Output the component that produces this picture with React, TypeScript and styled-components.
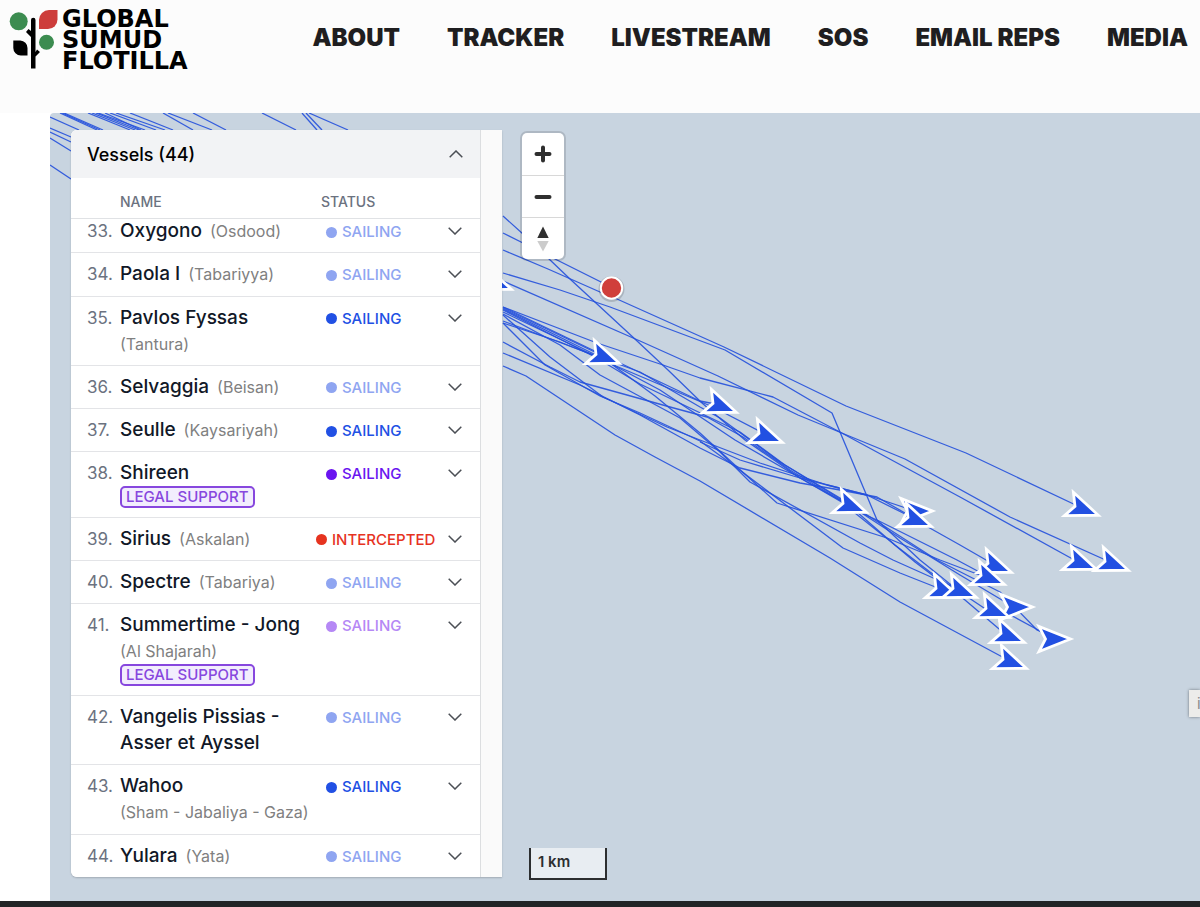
import React, { useLayoutEffect, useRef } from 'react';
import styled, { createGlobalStyle } from 'styled-components';

const GlobalStyle = createGlobalStyle`
  *, *::before, *::after { box-sizing: border-box; }
  html, body, #root { margin: 0; height: 100%; }
  body { background: #ffffff; font-family: Inter, "Liberation Sans", sans-serif; color: #111827; }
  button { font: inherit; color: inherit; border: 0; padding: 0; background: none; cursor: pointer; }
`;

/* ---------- page frame ---------- */

const Page = styled.div`
  min-height: 100%;
  display: flex;
  flex-direction: column;
`;

const Header = styled.header`
  height: 113px;
  flex: none;
  display: flex;
  align-items: flex-start;
  justify-content: space-between;
  padding: 9px 12px 0 9px;
  background: #fcfcfc;
`;

const Brand = styled.a`
  display: flex;
  gap: 4px;
  color: #000000;
  text-decoration: none;
`;

const BrandName = styled.span`
  display: flex;
  flex-direction: column;
  font-family: "DejaVu Sans", Inter, sans-serif;
  font-size: 24px;
  font-weight: 700;
  line-height: 21px;
`;

const Nav = styled.nav`
  display: flex;
  gap: 47px;
  padding-top: 13px;
`;

const NavLink = styled.a`
  color: #1f1e20;
  font-size: 24px;
  font-weight: 900;
  line-height: 32px;
  text-decoration: none;
  white-space: nowrap;
`;

const Footer = styled.footer`
  height: 6px;
  flex: none;
  background: #222426;
`;

/* ---------- map ---------- */

const MapArea = styled.main`
  position: relative;
  flex: 1;
  display: flex;
  gap: 20px;
  margin-left: 50px;
  padding: 17px 0 24px 21px;
  overflow: hidden;
  border-top-left-radius: 4px;
  background: #c8d4e0;
`;

const Routes = styled.svg`
  position: absolute;
  inset: 0;
  width: 100%;
  height: 100%;
`;

const MapTools = styled.div`
  position: relative;
  display: flex;
  flex-direction: column;
  justify-content: space-between;
  align-items: flex-start;
  padding-top: 3px;
`;

const ZoomGroup = styled.div`
  display: flex;
  flex-direction: column;
  width: 42px;
  overflow: hidden;
  border-radius: 5px;
  background: #ffffff;
  box-shadow: 0 0 0 2px rgba(0, 0, 0, 0.13);
`;

const ToolButton = styled.button`
  display: flex;
  align-items: center;
  justify-content: center;
  height: 42px;
  & + & { border-top: 1px solid #d8d8d8; }
`;

const ScaleBar = styled.div`
  width: 78px;
  height: 32px;
  margin: 0 0 -3px 7px;
  padding-left: 7px;
  border: 2px solid #2c2e30;
  border-top: 0;
  background: #e8edf2;
  color: #2c2e30;
  font-size: 15px;
  font-weight: 600;
  line-height: 28px;
`;

const InfoTab = styled.button`
  position: absolute;
  right: 0;
  bottom: 184px;
  width: 11px;
  height: 27px;
  padding-left: 8px;
  overflow: hidden;
  background: #ececea;
  box-shadow: 0 0 3px rgba(0, 0, 0, 0.45);
  color: #8a8a8a;
  font-size: 15px;
  text-align: left;
`;

/* ---------- vessel panel ---------- */

const Panel = styled.section`
  position: relative;
  width: 431px;
  flex: none;
  display: flex;
  overflow: hidden;
  border-radius: 6px 0 0 6px;
  background: #fafafa;
  box-shadow: 0 1px 2px rgba(0, 0, 0, 0.2);
`;

const PanelBody = styled.div`
  flex: 1;
  display: flex;
  flex-direction: column;
  margin-right: 21px;
  border-right: 1px solid #dcdee0;
  background: #ffffff;
`;

const PanelToggle = styled.button`
  height: 48px;
  flex: none;
  display: flex;
  align-items: center;
  justify-content: space-between;
  padding: 0 17px 0 16px;
  background: #f2f3f5;
  color: #000000;
  font-size: 18px;
  font-weight: 500;
`;

const Scroller = styled.div`
  flex: 1 1 0;
  min-height: 0;
  overflow-y: auto;
  scrollbar-width: none;
`;

const VesselTable = styled.table`
  width: 100%;
  height: calc(100% + 9px);
  border-collapse: separate;
  border-spacing: 0;
  table-layout: fixed;
`;

const HeadCell = styled.th<{ $inset?: number }>`
  position: sticky;
  top: 0;
  height: 41px;
  z-index: 1;
  padding: 7px 0 0 ${(p) => p.$inset ?? 0}px;
  border-bottom: 1px solid #e0e2e5;
  background: #ffffff;
  color: #6b7280;
  font-size: 14px;
  font-weight: 500;
  line-height: 18px;
  text-align: left;
`;

const Cell = styled.td`
  padding: 8px 0;
  border-bottom: 1px solid #e3e4e7;
  vertical-align: top;
  line-height: 26px;
  tr:last-child > & { border-bottom: 0; }
`;

const NumberCell = styled(Cell)`
  padding-left: 16px;
  color: #6b7280;
  font-size: 17px;
`;

const Names = styled.div`
  display: flex;
  flex-wrap: wrap;
  column-gap: 8px;
`;

const VesselName = styled.span`
  font-size: 19px;
  font-weight: 500;
`;

const Alias = styled.span`
  color: #808080;
  font-size: 16px;
  white-space: nowrap;
`;

const Badge = styled.span`
  display: block;
  width: fit-content;
  height: 22px;
  padding: 0 4px;
  border: 2px solid #8747de;
  border-radius: 5px;
  background: #f2edfd;
  color: #8747de;
  font-size: 15px;
  font-weight: 500;
  line-height: 18px;
`;

const Status = styled.span<{ $color: string; $wide: boolean }>`
  display: flex;
  align-items: center;
  gap: 5px;
  padding-left: ${(p) => (p.$wide ? 0 : 10)}px;
  color: ${(p) => p.$color};
  font-size: 15px;
  font-weight: 500;
  line-height: 26px;
  white-space: nowrap;
  &::before {
    content: "";
    width: 11px;
    height: 11px;
    border-radius: 50%;
    background: currentColor;
  }
`;

const StatusCell = styled(Cell)`
  padding: 9px 0 7px;
`;

const RowToggle = styled.button`
  display: flex;
  align-items: center;
  height: 26px;
`;

/* ---------- data ---------- */

type Tone = 'pale' | 'blue' | 'violet' | 'lilac' | 'red';

const tones: Record<Tone, string> = {
  pale: '#8fa5f1',
  blue: '#2150e4',
  violet: '#6a14f0',
  lilac: '#b588f5',
  red: '#e6331f',
};

interface Vessel {
  no: number;
  name: string;
  alias?: string;
  tone: Tone;
  legal?: boolean;
}

const vessels: Vessel[] = [
  { no: 33, name: 'Oxygono', alias: 'Osdood', tone: 'pale' },
  { no: 34, name: 'Paola I', alias: 'Tabariyya', tone: 'pale' },
  { no: 35, name: 'Pavlos Fyssas', alias: 'Tantura', tone: 'blue' },
  { no: 36, name: 'Selvaggia', alias: 'Beisan', tone: 'pale' },
  { no: 37, name: 'Seulle', alias: 'Kaysariyah', tone: 'blue' },
  { no: 38, name: 'Shireen', tone: 'violet', legal: true },
  { no: 39, name: 'Sirius', alias: 'Askalan', tone: 'red' },
  { no: 40, name: 'Spectre', alias: 'Tabariya', tone: 'pale' },
  { no: 41, name: 'Summertime - Jong', alias: 'Al Shajarah', tone: 'lilac', legal: true },
  { no: 42, name: 'Vangelis Pissias - Asser et Ayssel', tone: 'pale' },
  { no: 43, name: 'Wahoo', alias: 'Sham - Jabaliya - Gaza', tone: 'blue' },
  { no: 44, name: 'Yulara', alias: 'Yata', tone: 'pale' },
];

const navItems = ['ABOUT', 'TRACKER', 'LIVESTREAM', 'SOS', 'EMAIL REPS', 'MEDIA'];

const routes = [
  '50,117 79,130', '62,113 100,130', '64,113 103,130', '60,113 97,130',
  '50,128 71,137', '50,132 71,142', '50,138 71,151', '50,165 71,179',
  '88,113 130,130', '92,113 135,130', '96,113 139,130', '98,113 145,130', '105,113 141,130',
  '110,113 156,130', '116,113 165,130', '130,113 173,130',
  '163,113 193,130', '168,113 212,130', '193,113 226,130', '262,113 296,130',
  '302,113 317,130', '306,113 322,130', '309,113 348,130',
  '503,233 523,243 553,258 611,287',
  '503,216 523,234 548,258 570,279 636,340 668,370 702,403 745,440 800,478 845,503',
  '503,250 548,269 600,292 617,299 724,347 846,406 966,453 1082,508',
  '503,273 560,290 610,307 725,350 832,413 877,520 920,560 960,592',
  '503,281 640,341 718,376 798,415 905,459 1010,517 1110,562',
  '503,307 597,343 663,365 700,378 773,397 838,431 960,497 1078,562',
  '503,308 603,356',
  '503,307 603,355 660,382 700,401 720,405',
  '503,309 598,356 616,366 713,407 765,434',
  '503,310 595,357 640,384 740,432 785,465 845,501',
  '503,312 610,363 655,396 700,433 737,467 777,503 887,538 940,560 985,577',
  '503,314 560,345 600,375 680,418 720,452 750,482 860,543 893,560 960,590',
  '503,315 550,357 587,385 603,397 667,427 700,440 760,463 827,485 867,495 912,510',
  '503,323 545,365 600,396 640,413 700,441 737,468 843,548 900,573 943,590',
  '503,321 580,350 640,372 700,407 720,418 780,462 845,502',
  '503,323 560,342 600,358 660,390 735,440 845,504',
  '503,342 550,367 580,382 627,395 670,407 707,417 743,437 790,470 845,503',
  '503,353 580,385 640,415 700,448 740,468 800,483 840,490 877,497 912,517',
  '503,366 526,376 615,435 655,457 700,481 830,558 900,602 1008,660',
  '700,442 740,460 800,478 867,495 903,513 960,545 993,564',
  '850,508 877,520 957,560 985,575',
  '850,505 867,515 937,560 1000,592 1037,630 1050,636',
  '850,509 890,541 915,562 965,600 1005,634',
  '850,506 895,545 930,572 990,612',
  '860,512 900,538 960,575 1012,606',
  '1005,612 1053,638',
];

/* x, y, heading in degrees clockwise from east */
const arrows: [number, number, number][] = [
  [495, 283, 21], [603, 357, 21], [720, 406, 21], [766, 436, 21], [850, 506, 21],
  [915, 511, 0], [915, 520, 21], [1082, 509, 21], [1080, 563, 21], [1112, 564, 21],
  [995, 566, 21], [988, 578, 21], [943, 591, 21], [960, 591, 21], [1015, 607, 0],
  [993, 611, 21], [1008, 636, 21], [1053, 639, 0], [1010, 662, 21],
];

/* ---------- pieces ---------- */

const LogoMark = () => (
  <svg width="49" height="60" viewBox="9 9 49 60" aria-hidden="true">
    <circle cx="18.700" cy="21.300" r="9" fill="#3c8c50" />
    <circle cx="46.500" cy="42.200" r="7.500" fill="#3c8c50" />
    <path d="M57.500 10v9.500a9.500 9.500 0 0 1-9.500 9.500h-9v-9a10 10 0 0 1 10-10z" fill="#cd3d3b" />
    <path d="M13.300 40.500h7a7.500 7.500 0 0 1 7.200 7.500v7.500h-6.700a7.500 7.500 0 0 1-7.500-7.500z" />
    <path d="M31 20a2 2 0 0 1 4.500 0v32l1.500-2.500 3 2.500-4.500 4.500v12h-4.500V37l-5-5 2.500-3 2.500 2z" />
  </svg>
);

const Chevron = ({ up = false }: { up?: boolean }) => (
  <svg width="14" height="8" viewBox="0 0 14 8" fill="none" stroke="#4b4f55" strokeWidth="1.500" aria-hidden="true">
    <path d={up ? 'M.7 7.300 7 1l6.300 6.300' : 'M.7.7 7 7 13.300.7'} />
  </svg>
);

const RouteMap = () => (
  <Routes viewBox="50 113 1150 788" preserveAspectRatio="xMinYMin slice" aria-hidden="true">
    <g fill="none" stroke="#2450dc" strokeWidth="1.300" strokeOpacity=".9" strokeLinejoin="round">
      {routes.map((points) => (
        <polyline key={points} points={points} />
      ))}
    </g>
    <g fill="#2250e2" stroke="#ffffff" strokeWidth="2.800" strokeMiterlimit="10">
      {arrows.map(([x, y, heading]) => (
        <path key={`${x}-${y}`} d="M17.500 0-14 12.500-7.500 0-14-12.500z" transform={`translate(${x} ${y}) rotate(${heading})`} />
      ))}
    </g>
    <circle cx="611.500" cy="289" r="13" fill="#000000" opacity=".15" />
    <circle cx="611.500" cy="288" r="10.700" fill="#d03f3b" stroke="#ffffff" strokeWidth="2" />
  </Routes>
);

const VesselRow = ({ no, name, alias, tone, legal }: Vessel) => (
  <tr>
    <NumberCell>{no}.</NumberCell>
    <Cell>
      <Names>
        <VesselName>{name}</VesselName>
        {alias && <Alias>({alias})</Alias>}
      </Names>
      {legal && <Badge>LEGAL SUPPORT</Badge>}
    </Cell>
    <StatusCell>
      <Status $color={tones[tone]} $wide={tone === 'red'}>
        {tone === 'red' ? 'INTERCEPTED' : 'SAILING'}
      </Status>
    </StatusCell>
    <Cell>
      <RowToggle aria-label={`Show details of ${name}`}>
        <Chevron />
      </RowToggle>
    </Cell>
  </tr>
);

export default function App() {
  const scroller = useRef<HTMLDivElement>(null);

  useLayoutEffect(() => {
    const el = scroller.current;
    if (el) el.scrollTop = el.scrollHeight;
  }, []);

  return (
    <Page>
      <GlobalStyle />
      <Header>
        <Brand href="#home">
          <LogoMark />
          <BrandName>
            <span>GLOBAL</span>
            <span>SUMUD</span>
            <span>FLOTILLA</span>
          </BrandName>
        </Brand>
        <Nav>
          {navItems.map((item) => (
            <NavLink key={item} href="#">
              {item}
            </NavLink>
          ))}
        </Nav>
      </Header>
      <MapArea>
        <RouteMap />
        <Panel>
          <PanelBody>
            <PanelToggle aria-expanded="true">
              Vessels (44)
              <Chevron up />
            </PanelToggle>
            <Scroller ref={scroller}>
              <VesselTable>
                <colgroup>
                  <col style={{ width: 49 }} />
                  <col />
                  <col style={{ width: 132 }} />
                  <col style={{ width: 32 }} />
                </colgroup>
                <thead>
                  <tr>
                    <HeadCell />
                    <HeadCell scope="col">NAME</HeadCell>
                    <HeadCell scope="col" $inset={5}>STATUS</HeadCell>
                    <HeadCell />
                  </tr>
                </thead>
                <tbody>
                  {vessels.map((v) => (
                    <VesselRow key={v.no} {...v} />
                  ))}
                </tbody>
              </VesselTable>
            </Scroller>
          </PanelBody>
        </Panel>
        <MapTools>
          <ZoomGroup>
            <ToolButton aria-label="Zoom in">
              <svg width="18" height="18" viewBox="0 0 18 18" stroke="#2f2f2f" strokeWidth="4" strokeLinecap="round">
                <path d="M9 2.500v13M2.500 9h13" />
              </svg>
            </ToolButton>
            <ToolButton aria-label="Zoom out">
              <svg width="18" height="18" viewBox="0 0 18 18" stroke="#2f2f2f" strokeWidth="4" strokeLinecap="round">
                <path d="M2.500 9h13" />
              </svg>
            </ToolButton>
            <ToolButton aria-label="Reset bearing to north">
              <svg width="12" height="26" viewBox="0 0 12 26">
                <path d="M6 .5 11.700 12H.3z" fill="#2f2f2f" />
                <path d="M6 25.500 11.700 15H.3z" fill="#cccccc" />
              </svg>
            </ToolButton>
          </ZoomGroup>
          <ScaleBar>1 km</ScaleBar>
        </MapTools>
        <InfoTab aria-label="Map information">i</InfoTab>
      </MapArea>
      <Footer />
    </Page>
  );
}
